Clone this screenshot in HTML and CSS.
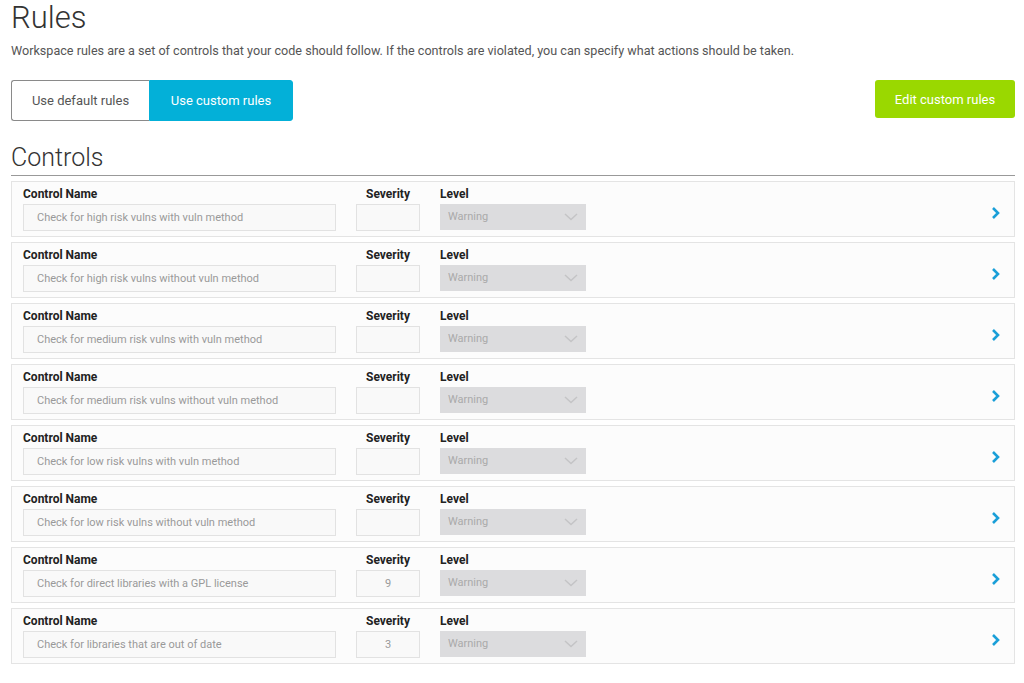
FILE: index.html
```html
<!DOCTYPE html>
<html lang="en">
<head>
  <meta charset="UTF-8" />
  <title>Rules</title>
  <link rel="stylesheet" href="styles.css">
</head>
<body>

<h1 class="page-title">Rules</h1>
<p class="page-desc">Workspace rules are a set of controls that your code should follow. If the controls are violated, you can specify what actions should be taken.</p>

<div class="toolbar">
  <div class="toggle">
    <button class="toggle-btn">Use default rules</button>
    <button class="toggle-btn active">Use custom rules</button>
  </div>
  <button class="btn-edit">Edit custom rules</button>
</div>

<h2 class="section-title">Controls</h2>
<div class="controls" id="controls"></div>

<script>
  const controls = [
    { name: 'Check for high risk vulns with vuln method', severity: '' },
    { name: 'Check for high risk vulns without vuln method', severity: '' },
    { name: 'Check for medium risk vulns with vuln method', severity: '' },
    { name: 'Check for medium risk vulns without vuln method', severity: '' },
    { name: 'Check for low risk vulns with vuln method', severity: '' },
    { name: 'Check for low risk vulns without vuln method', severity: '' },
    { name: 'Check for direct libraries with a GPL license', severity: '9' },
    { name: 'Check for libraries that are out of date', severity: '3' }
  ];

  const lista = document.getElementById('controls');
  controls.forEach(c => {
    lista.innerHTML += `
      <div class="control">
        <div class="field field-name">
          <label>Control Name</label>
          <div class="input">${c.name}</div>
        </div>
        <div class="field field-sev">
          <label>Severity</label>
          <div class="input">${c.severity}</div>
        </div>
        <div class="field field-level">
          <label>Level</label>
          <div class="select">Warning
            <svg width="14" height="8" viewBox="0 0 14 8"><polyline points="1,1 7,6.5 13,1" fill="none" stroke="#c4c4c6" stroke-width="1.5"/></svg>
          </div>
        </div>
        <svg class="chevron" width="10" height="14" viewBox="0 0 10 14"><polyline points="2,2 7,7 2,12" fill="none" stroke="#1a9fd8" stroke-width="2.6"/></svg>
      </div>
    `;
  });
</script>

</body>
</html>
```

FILE: styles.css
```css
* { box-sizing: border-box; margin: 0; padding: 0; }
body {
  font-family: Roboto, 'Liberation Sans', sans-serif;
  background: #fff;
  color: #333;
  padding: 0 9px 0 11px;
  width: 1024px;
}
.page-title {
  font-size: 31px;
  font-weight: 300;
  color: #333;
  line-height: 36px;
  margin-top: 0;
}
.page-desc {
  font-size: 12.6px;
  color: #555;
  margin-top: 7px;
  line-height: 16px;
}
.toolbar {
  display: flex;
  justify-content: space-between;
  align-items: flex-start;
  margin-top: 21px;
}
.toggle {
  display: flex;
}
.toggle-btn {
  font-family: inherit;
  font-size: 13px;
  height: 41px;
  border: 1px solid #8a8a8a;
  background: #fff;
  color: #555;
  cursor: pointer;
}
.toggle-btn:first-child {
  width: 138px;
  border-right: none;
  border-radius: 3px 0 0 3px;
}
.toggle-btn.active {
  width: 144px;
  background: #03b0d8;
  border-color: #03b0d8;
  color: #fff;
  border-radius: 0 3px 3px 0;
}
.btn-edit {
  font-family: inherit;
  font-size: 13px;
  width: 140px;
  height: 38px;
  background: #9ad800;
  color: #fff;
  border: none;
  border-radius: 3px;
  cursor: pointer;
}
.section-title {
  font-size: 25px;
  font-weight: 300;
  color: #333;
  line-height: 30px;
  margin-top: 22px;
  padding-bottom: 2px;
  border-bottom: 1px solid #999;
}
.controls {
  display: flex;
  flex-direction: column;
  gap: 5px;
  margin-top: 5px;
}
.control {
  display: flex;
  align-items: flex-end;
  gap: 20px;
  height: 56px;
  padding: 0 13px 5px 11px;
  background: #fcfcfc;
  border: 1px solid #e4e4e4;
}
.field label {
  display: block;
  font-size: 12px;
  font-weight: 700;
  color: #222;
  line-height: 14px;
  margin-bottom: 3px;
}
.input {
  height: 27px;
  border: 1px solid #e2e2e2;
  background: #f9f9f9;
  font-size: 11px;
  color: #999;
  line-height: 25px;
  padding: 0 13px;
}
.field-name { width: 313px; }
.field-sev { width: 64px; }
.field-sev label,
.field-sev .input { text-align: center; }
.field-level { width: 146px; }
.select {
  height: 26px;
  background: #dcdcde;
  font-size: 11px;
  color: #aaa;
  line-height: 26px;
  padding: 0 8px;
  display: flex;
  justify-content: space-between;
  align-items: center;
  margin-bottom: 1px;
}
.chevron {
  margin-left: auto;
  margin-bottom: 11px;
}
```
